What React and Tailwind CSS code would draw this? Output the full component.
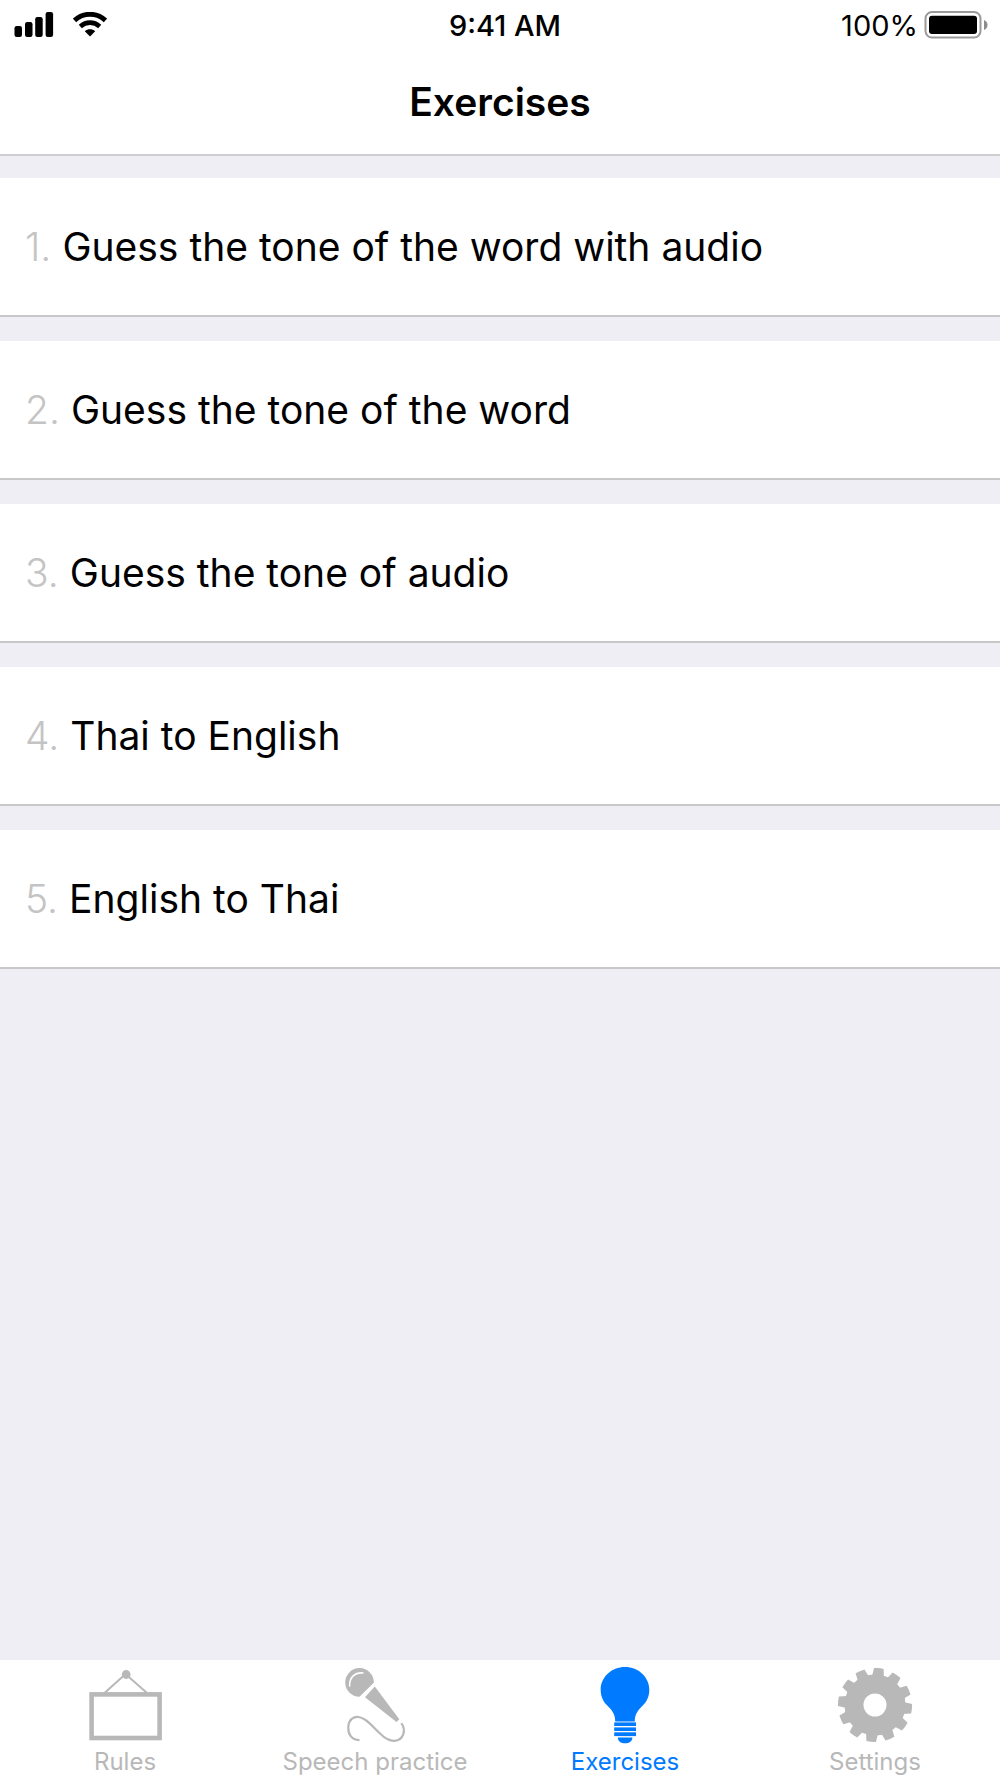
import React, { useState } from "react";

const exercises = [
  "Guess the tone of the word with audio",
  "Guess the tone of the word",
  "Guess the tone of audio",
  "Thai to English",
  "English to Thai",
];

const teeth = [0, 30, 60, 90, 120, 150, 180, 210, 240, 270, 300, 330];

function SignalIcon() {
  return (
    <svg width="40" height="28" viewBox="0 0 40 28" fill="currentColor" aria-hidden="true">
      <rect x="0.5" y="14" width="7.5" height="11" rx="2.2" />
      <rect x="11" y="10" width="7.5" height="15" rx="2.2" />
      <rect x="21.2" y="5" width="7.5" height="20" rx="2.2" />
      <rect x="31.6" y="0" width="7.5" height="25" rx="2.2" />
    </svg>
  );
}

function WifiIcon() {
  return (
    <svg width="34" height="28" viewBox="0 0 34 28" fill="none" stroke="currentColor" aria-hidden="true">
      <path d="M1.5 8.4C10.5 .3 23.5 .3 32.5 8.4" strokeWidth="5" />
      <path d="M7.3 14.4C13 9.4 21 9.4 26.7 14.4" strokeWidth="4.6" />
      <path d="M17 24.5L11.8 19.2C14.8 16.7 19.2 16.7 22.2 19.2Z" fill="currentColor" stroke="none" />
    </svg>
  );
}

function BatteryIcon() {
  return (
    <svg width="64" height="30" viewBox="0 0 64 30" aria-hidden="true">
      <rect x="1.5" y="1" width="55" height="25.5" rx="6.5" fill="none" stroke="#9a9a9a" strokeWidth="2" />
      <rect x="5" y="4.7" width="48" height="18.2" rx="3" fill="#000" />
      <path d="M60 9V19C62.7 17.8 63.5 16 63.5 14S62.7 10.2 60 9Z" fill="#8c8c8c" />
    </svg>
  );
}

function RulesIcon() {
  return (
    <svg width="76" height="76" viewBox="0 0 76 76" fill="none" stroke="currentColor" aria-hidden="true">
      <path d="M17.5 25L38.5 6L60 25" strokeWidth="2" />
      <circle cx="39.2" cy="6.5" r="4.4" fill="currentColor" stroke="none" />
      <rect x="4.6" y="26.4" width="68" height="43.6" strokeWidth="4.6" />
    </svg>
  );
}

function MicIcon() {
  return (
    <svg width="76" height="76" viewBox="0 0 76 76" fill="none" aria-hidden="true">
      <path
        d="M22.5 28.7A14.3 14.3 0 1 1 36.8 14.8Z"
        fill="currentColor"
      />
      <path d="M12.7 18.5C12 9.5 17.5 4.2 26.5 5" stroke="#fff" strokeWidth="1.6" />
      <path d="M37.8 18.5L62.3 51.2L59.5 54L28 29.3Z" fill="currentColor" />
      <path
        d="M22.5 72.2C13.5 71.8 10.8 65 11.3 58.5C11.9 51.5 16.5 48.5 21.5 49C33.5 50 43 72.8 57.5 72.8C66.5 72.5 69.5 62 64.3 55.2"
        stroke="currentColor"
        strokeWidth="2.2"
      />
    </svg>
  );
}

function BulbIcon() {
  return (
    <svg width="76" height="76" viewBox="0 -1 76 76" fill="currentColor" className="overflow-visible" aria-hidden="true">
      <path d="M38 -2C51.5 -2 62.3 8 62.3 21C62.3 28 59.5 32.8 55.5 36.8C50 42.3 47.8 46 47.8 52.4H28.2C28.2 46 26 42.3 20.5 36.8C16.5 32.8 13.7 28 13.7 21C13.7 8 24.5 -2 38 -2Z" />
      <rect x="27.2" y="53.4" width="21.8" height="3.6" />
      <rect x="27.2" y="58.4" width="21.8" height="3.6" />
      <rect x="27.2" y="63.3" width="21.8" height="3.8" />
      <path d="M30.8 68.5H45.4C45.4 72.2 42.3 74.3 38.1 74.3S30.8 72.2 30.8 68.5Z" />
    </svg>
  );
}

function GearIcon() {
  return (
    <svg width="76" height="76" viewBox="0 0 76 76" fill="currentColor" aria-hidden="true">
      <circle cx="38" cy="37" r="21" fill="none" stroke="currentColor" strokeWidth="19" />
      {teeth.map((angle) => (
        <path
          key={angle}
          d="M32 9L33.2 .2Q38 -.4 42.8 .2L44 9Z"
          transform={`rotate(${angle + 6} 38 37)`}
        />
      ))}
    </svg>
  );
}

const tabs = [
  { name: "Rules", Icon: RulesIcon },
  { name: "Speech practice", Icon: MicIcon },
  { name: "Exercises", Icon: BulbIcon },
  { name: "Settings", Icon: GearIcon },
];

function StatusBar() {
  return (
    <div className="grid grid-cols-3 items-center pt-2 pr-3 pl-3.5">
      <div className="flex items-center gap-[19px]">
        <SignalIcon />
        <WifiIcon />
      </div>
      <p className="pl-2 text-center text-[29px] leading-9 font-medium">9:41 AM</p>
      <div className="flex items-center justify-end gap-1.5">
        <span className="text-[29px] leading-9">100%</span>
        <BatteryIcon />
      </div>
    </div>
  );
}

function App() {
  const [activeTab, setActiveTab] = useState("Exercises");

  return (
    <div className="flex min-h-screen flex-col bg-[#efeef4] font-[Inter,sans-serif] text-black">
      <header className="border-b-2 border-[#cfced2] bg-white">
        <StatusBar />
        <h1 className="pt-[33px] pb-[27px] text-center text-[39px] leading-[50px] font-semibold">
          Exercises
        </h1>
      </header>

      <main className="flex-1 pt-[22px]">
        <ol className="flex flex-col gap-6">
          {exercises.map((title, index) => (
            <li key={title} className="border-b-2 border-[#c8c8c8] bg-white">
              <button
                type="button"
                className="flex w-full items-center gap-[11px] px-[25px] py-11 text-left text-[39px] leading-[49px]"
              >
                <span className="font-light text-[#c4c4c4]">{index + 1}.</span>
                <span>{title}</span>
              </button>
            </li>
          ))}
        </ol>
      </main>

      <nav className="grid grid-cols-4 bg-white pt-2">
        {tabs.map(({ name, Icon }) => (
          <button
            key={name}
            type="button"
            onClick={() => setActiveTab(name)}
            className={`flex flex-col items-center gap-[3px] pb-px ${
              activeTab === name ? "text-[#007aff]" : "text-[#b8b8b8]"
            }`}
          >
            <Icon />
            <span className="text-2xl leading-[30px]">{name}</span>
          </button>
        ))}
      </nav>
    </div>
  );
}

export default App;
